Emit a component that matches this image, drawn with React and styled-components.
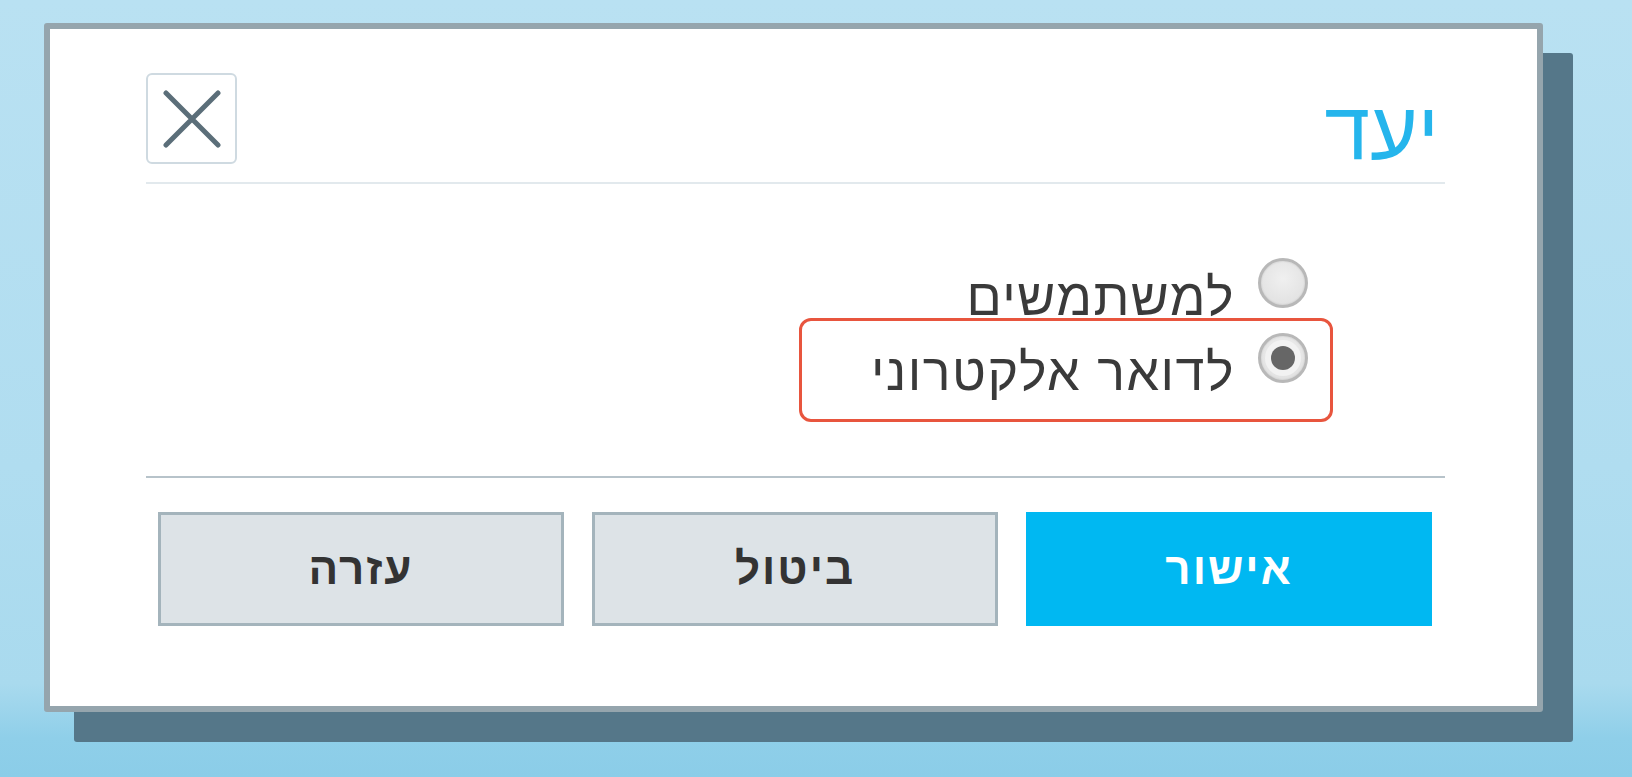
import React from 'react';
import styled, { createGlobalStyle } from 'styled-components';

const GlobalStyle = createGlobalStyle`
  body {
    margin: 0;
    font-family: "Liberation Sans", Arial, sans-serif;
    background: linear-gradient(
      180deg,
      #b9e1f2 0%,
      #b0ddf0 60%,
      #a9daee 88%,
      #8fcfe9 95%,
      #8bcde8 100%
    );
  }
`;

const Page = styled.div`
  min-height: 777px;
  box-sizing: border-box;
  padding: 23px 0 0 44px;
`;

const Dialog = styled.div`
  width: 1499px;
  height: 689px;
  box-sizing: border-box;
  border: 6px solid #95a5ad;
  border-radius: 3px;
  background: #fff;
  box-shadow: 30px 30px 0 #557789;
  display: flex;
  flex-direction: column;
  padding: 44px 92px 0 96px;
`;

const Header = styled.div`
  height: 111px;
  box-sizing: border-box;
  display: flex;
  justify-content: space-between;
  align-items: flex-start;
  border-bottom: 2px solid #e2e9ed;
`;

const Title = styled.h1`
  margin: 17px 6px 0 0;
  font-size: 82px;
  font-weight: normal;
  line-height: 1;
  color: #25b5ec;
`;

const CloseButton = styled.button`
  width: 91px;
  height: 91px;
  box-sizing: border-box;
  border: 2px solid #cfdae1;
  border-radius: 6px;
  background: #fff;
  display: flex;
  align-items: center;
  justify-content: center;
  padding: 0;
  cursor: pointer;
`;

const Body = styled.div`
  height: 292px;
  box-sizing: border-box;
  padding: 74px 137px 0 0;
`;

const Options = styled.div`
  display: flex;
  flex-direction: column;
  align-items: flex-start;
  gap: 10px;
`;

const OptionRow = styled.label`
  position: relative;
  display: inline-flex;
  align-items: flex-start;
  gap: 23px;
  cursor: pointer;
`;

const Radio = styled.span`
  width: 50px;
  height: 50px;
  box-sizing: border-box;
  border-radius: 50%;
  border: 3px solid #b8b8b8;
  background: radial-gradient(circle at 50% 40%, #f0f0f0 0%, #e3e3e3 70%, #d8d8d8 100%);
  box-shadow: inset 0 0 2px rgba(0, 0, 0, 0.15);
  display: flex;
  align-items: center;
  justify-content: center;

  &::after {
    content: '';
    width: 24px;
    height: 24px;
    border-radius: 50%;
    background: ${p => (p.checked ? '#666' : 'transparent')};
    box-shadow: ${p => (p.checked ? '0 0 0 6px #f2f2f2' : 'none')};
  }
`;

const Label = styled.span`
  font-size: 52px;
  line-height: 1;
  letter-spacing: 1.5px;
  color: #3a3a3a;
  margin-top: 13px;
`;

const Highlight = styled.span`
  position: absolute;
  top: -15px;
  bottom: -24px;
  right: -25px;
  left: -72px;
  border: 3px solid #e8553e;
  border-radius: 12px;
  pointer-events: none;
`;

const Footer = styled.div`
  border-top: 2px solid #b7c3ca;
  padding: 34px 13px 0 12px;
  display: flex;
  gap: 28px;
`;

const Button = styled.button`
  flex: 1;
  height: 114px;
  box-sizing: border-box;
  padding: 0;
  font-family: "Liberation Sans", Arial, sans-serif;
  font-size: 44px;
  font-weight: bold;
  letter-spacing: 2px;
  border: 3px solid ${p => (p.primary ? '#00b8f2' : '#a4b4bc')};
  background: ${p => (p.primary ? '#00b8f2' : '#dde3e7')};
  color: ${p => (p.primary ? '#fff' : '#333')};
  cursor: pointer;
`;

const CloseIcon = () => (
  <svg width="58" height="58" viewBox="0 0 58 58">
    <path d="M3 3 L55 55 M55 3 L3 55" stroke="#5b6e79" strokeWidth="5" strokeLinecap="round" />
  </svg>
);

const options = [
  { id: 'users', label: 'למשתמשים', checked: false },
  { id: 'email', label: 'לדואר אלקטרוני', checked: true, highlight: true },
];

const App = () => (
  <>
    <GlobalStyle />
    <Page>
      <Dialog dir="rtl">
        <Header>
          <Title>יעד</Title>
          <CloseButton aria-label="סגור">
            <CloseIcon />
          </CloseButton>
        </Header>
        <Body>
          <Options>
            {options.map(o => (
              <OptionRow key={o.id}>
                <Radio checked={o.checked} />
                <Label>{o.label}</Label>
                {o.highlight && <Highlight />}
              </OptionRow>
            ))}
          </Options>
        </Body>
        <Footer>
          <Button primary>אישור</Button>
          <Button>ביטול</Button>
          <Button>עזרה</Button>
        </Footer>
      </Dialog>
    </Page>
  </>
);

export default App;
